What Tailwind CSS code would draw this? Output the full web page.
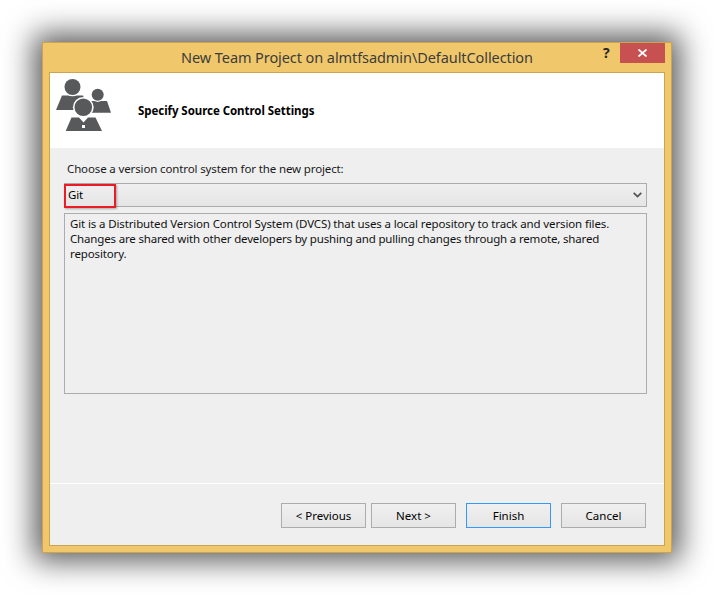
<!DOCTYPE html>
<html>
<head>
<meta charset="utf-8">
<script src="https://cdn.jsdelivr.net/npm/@tailwindcss/browser@4"></script>
</head>
<body class="bg-white w-[714px] h-[595px] overflow-hidden font-['Noto_Sans',sans-serif] text-[12px] text-black">
<div class="pt-[42px] pl-[42px]">
  <div class="relative w-[630px] h-[511px] bg-[#f0c76a] border border-[#c9a550] shadow-[0_0_28px_8px_rgba(0,0,0,0.65)] flex flex-col px-[6px] pb-[6px]">
    <div class="h-[29px] shrink-0 flex items-center justify-center text-[14.5px] tracking-[-0.08px] text-[#3c3c3c] pt-[1px]">New Team Project on almtfsadmin\DefaultCollection</div>
    <span class="absolute left-[560px] top-[0px] text-[14px] font-bold text-[#262626] leading-[20px]">?</span>
    <div class="absolute right-[6px] top-0 w-[45px] h-[20px] bg-[#c75050] flex items-center justify-center">
      <svg width="9" height="8" viewBox="0 0 9 8"><path d="M0.5 0.5L8.5 7.5M8.5 0.5L0.5 7.5" stroke="#fff" stroke-width="1.8" fill="none"/></svg>
    </div>
    <div class="flex-1 flex flex-col bg-[#efefef] border border-[#c9a550]">
      <div class="h-[75px] shrink-0 bg-white flex items-start">
        <svg class="w-[70px] h-[70px] shrink-0 -mt-[3px]" width="70" height="70" viewBox="0 0 70 70">
          <path d="M6 40L12 25.5L33 25.5L39 40Z" fill="#58595b"/>
          <circle cx="22.5" cy="17" r="9.2" fill="#fff"/>
          <circle cx="22.5" cy="17" r="8" fill="#58595b"/>
          <path d="M41 31L57 31L61 42.7L41 42.7Z" fill="#58595b"/>
          <circle cx="47.7" cy="24.7" r="7.2" fill="#fff"/>
          <circle cx="47.7" cy="24.7" r="6" fill="#58595b"/>
          <circle cx="33.3" cy="37.3" r="10.4" fill="#fff"/>
          <circle cx="33.3" cy="37.3" r="8.8" fill="#58595b"/>
          <path d="M21 46.7L29 46.7L33.5 52L38 46.7L46 46.7L52 61L15.7 61Z" fill="#fff" stroke="#fff" stroke-width="2"/>
          <path d="M21.5 47.5L29 47.5L33.5 52.5L38 47.5L45.5 47.5L52 61L15.7 61Z" fill="#58595b"/>
          <rect x="32" y="55" width="3" height="3" fill="#fff"/>
        </svg>
        <div class="ml-[18px] mt-[30px] leading-[16px] font-bold text-[11.5px] tracking-[-0.06px]">Specify Source Control Settings</div>
      </div>
      <div class="flex-1 flex flex-col relative">
        <div class="pl-[14px] pr-[17px] text-[11.5px] tracking-[-0.13px]">
          <div class="pl-[3px] mt-[13px] h-[16px] leading-[16px] text-[#1a1a1a]">Choose a version control system for the new project:</div>
          <div class="mt-[6px] h-[24px] border border-[#acacac] bg-gradient-to-b from-[#f0f0f0] to-[#e5e5e5] flex items-center justify-between pl-[3px] pr-[3px]">
            <span>Git</span>
            <svg width="9" height="6" viewBox="0 0 9 6" class="mr-[1px]"><path d="M0.7 0.8L4.5 4.6L8.3 0.8" stroke="#555" stroke-width="1.8" fill="none"/></svg>
          </div>
          <div class="mt-[6px] h-[181px] border border-[#acacac] pl-[5px] pr-[3px] pt-[2px] leading-[15px] text-[#111]">Git is a Distributed Version Control System (DVCS) that uses a local repository to track and version files.<br><span class="tracking-[-0.17px]">Changes are shared with other developers by pushing and pulling changes through a remote, shared</span><br>repository.</div>
        </div>
        <div class="absolute left-[14px] top-[36px] w-[52px] h-[24px] border-2 border-[#ed1c24] shadow-[1px_1px_2px_rgba(0,0,0,0.3)]"></div>
        <div class="mt-auto h-[62px] border-t border-white flex items-start justify-end gap-[5px] pr-[18px] pt-[19px] text-[11.5px]">
          <div class="w-[85px] h-[25px] border border-[#acacac] bg-gradient-to-b from-[#f0f0f0] to-[#e5e5e5] flex items-center justify-center">&lt; Previous</div>
          <div class="w-[85px] h-[25px] border border-[#acacac] bg-gradient-to-b from-[#f0f0f0] to-[#e5e5e5] flex items-center justify-center mr-[5px]">Next &gt;</div>
          <div class="w-[85px] h-[25px] border border-[#3399ff] bg-gradient-to-b from-[#f0f0f0] to-[#e5e5e5] flex items-center justify-center mr-[5px]">Finish</div>
          <div class="w-[85px] h-[25px] border border-[#acacac] bg-gradient-to-b from-[#f0f0f0] to-[#e5e5e5] flex items-center justify-center">Cancel</div>
        </div>
      </div>
    </div>
  </div>
</div>
</body>
</html>
